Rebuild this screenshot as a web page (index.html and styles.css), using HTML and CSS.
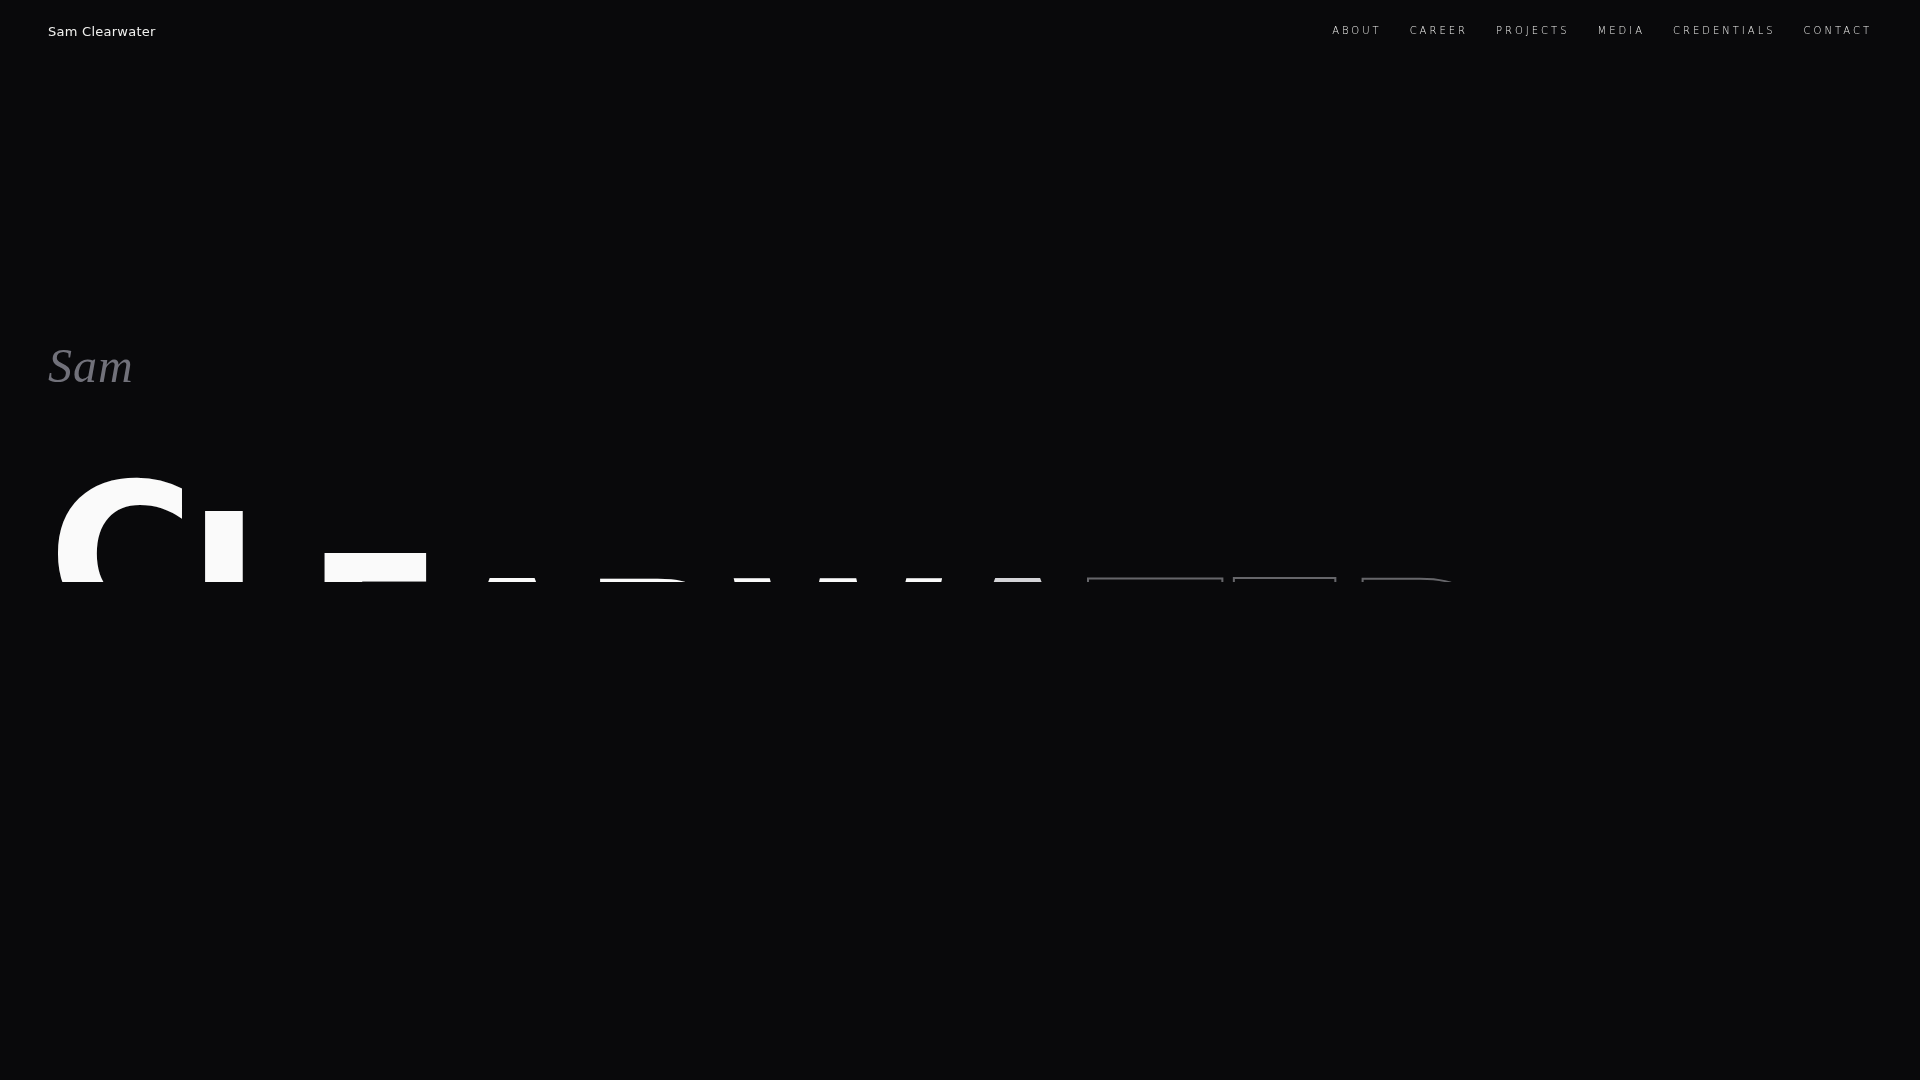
FILE: index.html
```html
<!DOCTYPE html>
<html lang="en">
<head>
    <meta charset="UTF-8">
    <meta name="viewport" content="width=device-width, initial-scale=1.0">
    <title>Sam Clearwater</title>
    <link rel="stylesheet" href="styles.css">
</head>
<body>
    <header class="site-header">
        <a class="brand" href="#top">Sam Clearwater</a>
        <nav class="site-nav" aria-label="Main">
            <a href="#about">About</a>
            <a href="#career">Career</a>
            <a href="#projects">Projects</a>
            <a href="#media">Media</a>
            <a href="#credentials">Credentials</a>
            <a href="#contact">Contact</a>
        </nav>
    </header>

    <main class="hero" id="top">
        <h1 class="hero-title">
            <span class="first-name">Sam</span>
            <span class="last-name"><span class="letter rise-1">C</span><span class="letter rise-2">L</span><span class="letter rise-3">E</span><span class="letter">A</span><span class="letter">R</span><span class="letter">W</span><span class="letter dim">A</span><span class="letter outline">T</span><span class="letter outline">E</span><span class="letter outline">R</span></span>
        </h1>
    </main>
</body>
</html>
```

FILE: styles.css
```css
* {
    margin: 0;
    padding: 0;
    box-sizing: border-box;
}

body {
    background: #09090b;
    color: #fafafa;
    font-family: "DejaVu Sans", sans-serif;
    min-height: 100vh;
    display: flex;
    flex-direction: column;
}

a {
    color: inherit;
    text-decoration: none;
}

.site-header {
    display: flex;
    justify-content: space-between;
    align-items: center;
    height: 62px;
    padding: 0 48px;
    mix-blend-mode: difference;
}

.brand {
    font-size: 13px;
    letter-spacing: 0.02em;
}

.site-nav {
    display: flex;
    gap: 28px;
    padding-bottom: 2px;
    font-size: 10px;
    font-weight: 300;
    letter-spacing: 0.3em;
    text-transform: uppercase;
}

.hero {
    flex: 1;
    padding: 277px 48px 0;
}

.hero-title {
    font-weight: 700;
}

.first-name {
    display: block;
    margin-bottom: 19px;
    color: #71717a;
    font-family: "Liberation Serif", serif;
    font-size: 48px;
    font-style: italic;
    font-weight: 400;
    line-height: 54px;
    letter-spacing: 0.02em;
}

.last-name {
    display: flex;
    overflow: hidden;
    font-size: 200px;
    line-height: 170px;
    letter-spacing: -0.04em;
}

.letter {
    transform: translateY(158px);
}

.rise-1 {
    transform: translateY(60px);
}

.rise-2 {
    transform: translateY(91px);
}

.rise-3 {
    transform: translateY(133px);
}

.dim {
    color: #d4d4d8;
}

.outline {
    color: transparent;
    -webkit-text-stroke: 2px #66666a;
}
```
